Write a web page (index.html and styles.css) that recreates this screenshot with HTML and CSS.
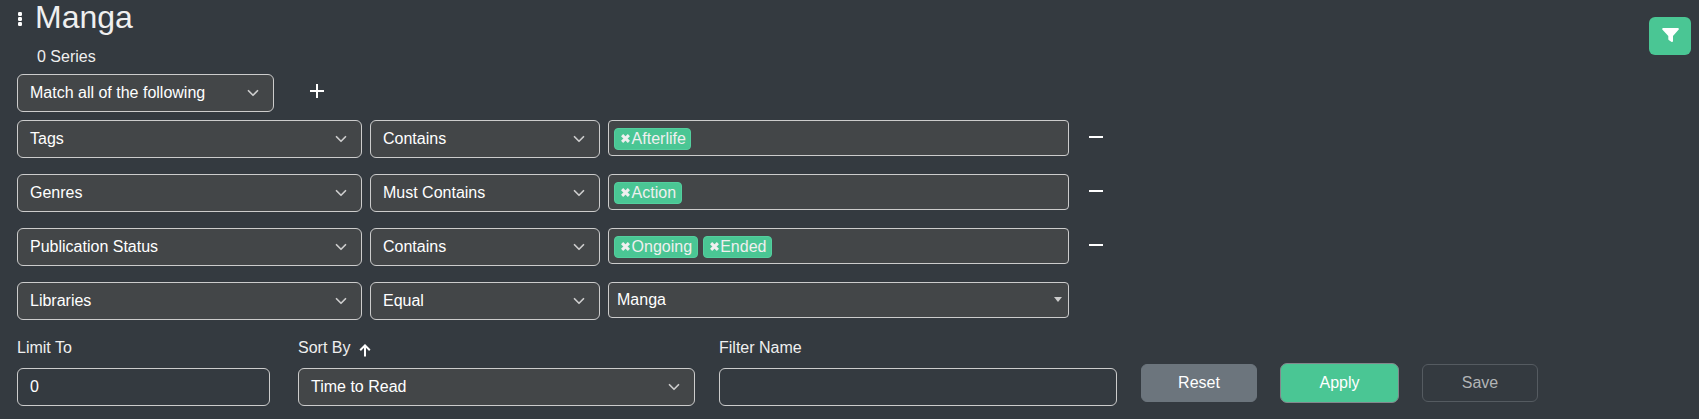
FILE: index.html
```html
<!DOCTYPE html>
<html lang="en">
<head>
<meta charset="utf-8">
<title>Manga</title>
<link rel="stylesheet" href="styles.css">
</head>
<body>
<svg class="defs" aria-hidden="true">
  <symbol id="chevron" viewBox="0 0 16 16"><path d="m2 5 6 6 6-6" fill="none" stroke="currentColor" stroke-width="2.300" stroke-linecap="round" stroke-linejoin="round"/></symbol>
  <symbol id="cross" viewBox="0 0 9 9"><path d="M1.100 1.100 7.900 7.900M7.900 1.100 1.100 7.900" stroke="currentColor" stroke-width="3"/></symbol>
</svg>
<header class="header">
  <div class="heading">
    <svg class="dots" viewBox="0 0 4 14"><rect width="4" height="4" rx="1.200"/><rect y="5" width="4" height="4" rx="1.200"/><rect y="10" width="4" height="4" rx="1.200"/></svg>
    <div>
      <h2 class="title">Manga</h2>
      <div class="count">0 Series</div>
    </div>
  </div>
  <button class="filter-btn" aria-label="Filter"><svg viewBox="0 0 17 14"><path d="M1 0h15q1.500.5.700 1.600L11 8v5.200q-.3 1-1.300.7L7 12.200q-.7-.4-.7-1V8L.3 1.600Q-.3.500 1 0z"/></svg></button>
</header>
<main class="filters">
  <div class="match">
    <div class="select">Match all of the following<svg class="chev"><use href="#chevron"/></svg></div>
    <svg class="plus" viewBox="0 0 14 14"><path d="M7 0v14M0 7h14"/></svg>
  </div>
  <div class="rule">
    <div class="select">Tags<svg class="chev"><use href="#chevron"/></svg></div>
    <div class="select">Contains<svg class="chev"><use href="#chevron"/></svg></div>
    <div class="multi"><span class="tag"><svg><use href="#cross"/></svg>Afterlife</span></div>
    <span class="minus"></span>
  </div>
  <div class="rule">
    <div class="select">Genres<svg class="chev"><use href="#chevron"/></svg></div>
    <div class="select">Must Contains<svg class="chev"><use href="#chevron"/></svg></div>
    <div class="multi"><span class="tag"><svg><use href="#cross"/></svg>Action</span></div>
    <span class="minus"></span>
  </div>
  <div class="rule">
    <div class="select">Publication Status<svg class="chev"><use href="#chevron"/></svg></div>
    <div class="select">Contains<svg class="chev"><use href="#chevron"/></svg></div>
    <div class="multi"><span class="tag"><svg><use href="#cross"/></svg>Ongoing</span><span class="tag"><svg><use href="#cross"/></svg>Ended</span></div>
    <span class="minus"></span>
  </div>
  <div class="rule">
    <div class="select">Libraries<svg class="chev"><use href="#chevron"/></svg></div>
    <div class="select">Equal<svg class="chev"><use href="#chevron"/></svg></div>
    <div class="multi single">Manga<span class="caret"></span></div>
  </div>
  <div class="footer">
    <div class="field limit"><div class="label">Limit To</div><div class="select input">0</div></div>
    <div class="field sort"><div class="label">Sort By<svg class="arrow" viewBox="0 0 12 13"><path d="M6 12.500V1.500M1.200 6.200 6 1.400l4.800 4.800"/></svg></div><div class="select">Time to Read<svg class="chev"><use href="#chevron"/></svg></div></div>
    <div class="field name"><div class="label">Filter Name</div><div class="select input"></div></div>
    <div class="actions">
      <button class="btn reset">Reset</button>
      <button class="btn apply">Apply</button>
      <button class="btn save">Save</button>
    </div>
  </div>
</main>
</body>
</html>
```
FILE: styles.css
```css
* { box-sizing: border-box; }
body {
  margin: 0;
  height: 419px;
  overflow: hidden;
  background: #343a40;
  color: #efefef;
  font: 16px/24px "Liberation Sans", Arial, sans-serif;
}
.defs { position: absolute; width: 0; height: 0; }
.header {
  display: flex;
  justify-content: space-between;
  height: 74px;
  padding: 0 8px 0 18px;
}
.heading { display: flex; }
.dots { width: 4px; height: 14px; margin: 12px 13px 0 0; fill: #fff; }
.title { margin: 0; font-size: 32px; font-weight: 400; line-height: 38px; margin-top: -2px; }
.count { margin: 9px 0 0 2px; }
.filter-btn {
  width: 42px;
  height: 38px;
  margin-top: 17px;
  padding: 0;
  border: 0;
  border-radius: 6px;
  background: #4ac694;
}
.filter-btn svg { display: block; width: 17px; height: 14px; margin: -2px auto 0; fill: #fff; }
.filters { padding: 0 17px; }
.select {
  display: flex;
  align-items: center;
  justify-content: space-between;
  height: 38px;
  padding: 0 14px 0 12px;
  border: 1px solid #ccc;
  border-radius: 6px;
  background: #434648;
  color: #fff;
}
.chev { width: 12px; height: 12px; color: #ccc; }
.match { display: grid; grid-template-columns: 257px 14px; column-gap: 36px; margin-bottom: 8px; }
.plus { width: 14px; height: 14px; margin-top: 10px; stroke: #fff; stroke-width: 2; }
.rule { display: grid; grid-template-columns: 345px 230px 461px 14px; column-gap: 8px; height: 38px; margin-bottom: 16px; }
.multi {
  display: flex;
  gap: 5px;
  height: 36px;
  padding: 7px 5px;
  border: 1px solid #ccc;
  border-radius: 4px;
  background: #434648;
}
.tag {
  display: flex;
  align-items: center;
  height: 22px;
  padding: 0 4.5px 1px 6px;
  border: 1px solid #53cf9e;
  border-radius: 4px;
  background: #4ac694;
}
.tag svg { width: 9px; height: 9px; margin-right: 1.6px; }
.single { align-items: center; justify-content: space-between; padding: 0 6px 0 8px; color: #fff; }
.caret { border: 4px solid transparent; border-top: 5px solid #ccc; border-bottom: 0; margin-top: -2px; }
.minus { width: 14px; height: 2px; margin: 16px 0 0 12px; background: #fff; }
.footer { display: flex; }
.label { display: flex; height: 24px; margin-bottom: 8px; }
.arrow { width: 12px; height: 13px; margin: 8px 0 0 9px; fill: none; stroke: #fff; stroke-width: 2; }
.input { background: transparent; }
.limit { width: 253px; margin-right: 28px; }
.sort { width: 397px; margin-right: 24px; }
.name { width: 398px; margin-right: 24px; }
.actions { display: flex; align-items: center; height: 40px; margin-top: 27px; }
.btn {
  width: 116px;
  height: 38px;
  padding: 0 0 1px;
  border: 1px solid #6c757d;
  border-radius: 6px;
  font: inherit;
  color: #fff;
}
.reset { background: #6c757d; }
.apply { width: 119px; height: 40px; margin: 0 23px; border-color: #83888d; border-radius: 7px; background: #4ac694; }
.save { border-color: #555b61; background: transparent; color: #b2b4b6; }
```
